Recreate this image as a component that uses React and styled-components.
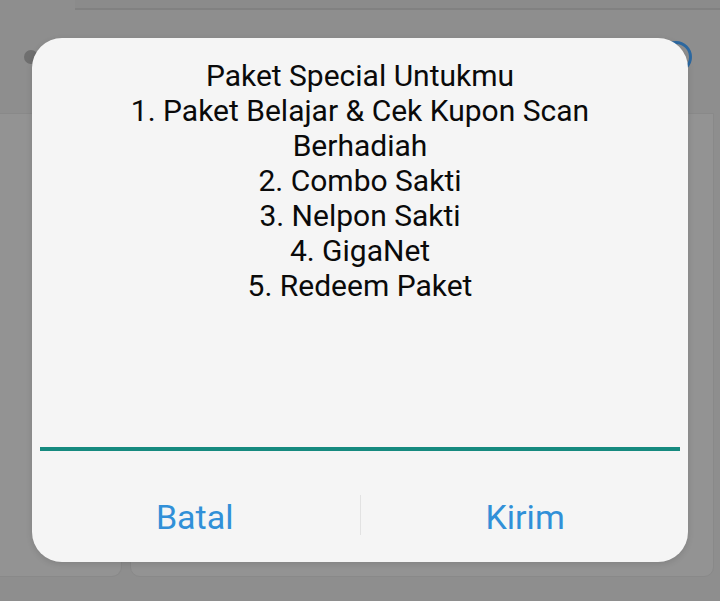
import React from "react";
import styled, { createGlobalStyle } from "styled-components";

const GlobalStyle = createGlobalStyle`
  html, body {
    margin: 0;
    padding: 0;
    background: #8e8e8e;
  }
  body {
    font-family: Roboto, "Noto Sans", "Liberation Sans", sans-serif;
  }
`;

const Screen = styled.div`
  position: relative;
  width: 720px;
  height: 601px;
  overflow: hidden;
  background: #8e8e8e;
  display: flex;
  flex-direction: column;
`;

const TopStrip = styled.div`
  height: 8px;
  margin-left: 75px;
  border-bottom: 2px solid #818181;
  background: #8b8b8b;
`;

const Header = styled.div`
  height: 103px;
  display: flex;
  align-items: center;
  justify-content: space-between;
  padding: 0 28px 40px 24px;
  box-sizing: border-box;
`;

const Blob = styled.div`
  width: 14px;
  height: 14px;
  border-radius: 50%;
  background: #6f6f6f;
  margin-top: 30px;
`;

const Ring = styled.div`
  width: 26px;
  height: 26px;
  border-radius: 50%;
  border: 3px solid #2c68a0;
  margin-top: 30px;
`;

const Cards = styled.div`
  flex: 1;
  display: grid;
  grid-template-columns: 122px 1fr;
  gap: 8px;
  padding: 0 6px 24px 0;
`;

const Card = styled.div`
  background: #939393;
  border: 1px solid #898989;
  border-radius: ${(p) => (p.$left ? "0 0 10px 0" : "0 0 10px 10px")};
  border-left: ${(p) => (p.$left ? "none" : "1px solid #898989")};
`;

const Dialog = styled.div`
  position: absolute;
  top: 38px;
  left: 32px;
  width: 656px;
  height: 524px;
  background: #f5f5f5;
  border-radius: 30px;
  display: flex;
  flex-direction: column;
  box-shadow: 0 2px 6px rgba(0, 0, 0, 0.12);
`;

const Message = styled.div`
  padding: 20px 30px 0;
  flex: 1;
  text-align: center;
  font-size: 30px;
  line-height: 35px;
  color: #0a0a0a;
`;

const Line = styled.div`
  height: 4px;
  margin: 0 8px;
  background: #168a7f;
`;

const Footer = styled.div`
  height: 111px;
  display: grid;
  grid-template-columns: 1fr 1px 1fr;
  align-items: center;
  padding-top: 16px;
  box-sizing: border-box;
`;

const ActionButton = styled.button`
  background: none;
  border: none;
  font-family: Roboto, "Noto Sans", sans-serif;
  font-size: 34px;
  color: #3190d8;
  padding: 0;
  height: 40px;
  line-height: 40px;
  cursor: pointer;
  justify-self: ${(p) => (p.$right ? "start" : "end")};
  margin: ${(p) => (p.$right ? "4px 0 0 125px" : "4px 126px 0 0")};
`;

const Divider = styled.div`
  width: 1px;
  height: 40px;
  background: #e2e2e2;
`;

const lines = [
  "Paket Special Untukmu",
  "1. Paket Belajar & Cek Kupon Scan",
  "Berhadiah",
  "2. Combo Sakti",
  "3. Nelpon Sakti",
  "4. GigaNet",
  "5. Redeem Paket",
];

export default function App() {
  return (
    <Screen>
      <GlobalStyle />
      <TopStrip />
      <Header>
        <Blob />
        <Ring />
      </Header>
      <Cards>
        <Card $left />
        <Card />
      </Cards>
      <Dialog>
        <Message>
          {lines.map((l) => (
            <div key={l}>{l}</div>
          ))}
        </Message>
        <Line />
        <Footer>
          <ActionButton>Batal</ActionButton>
          <Divider />
          <ActionButton $right>Kirim</ActionButton>
        </Footer>
      </Dialog>
    </Screen>
  );
}
